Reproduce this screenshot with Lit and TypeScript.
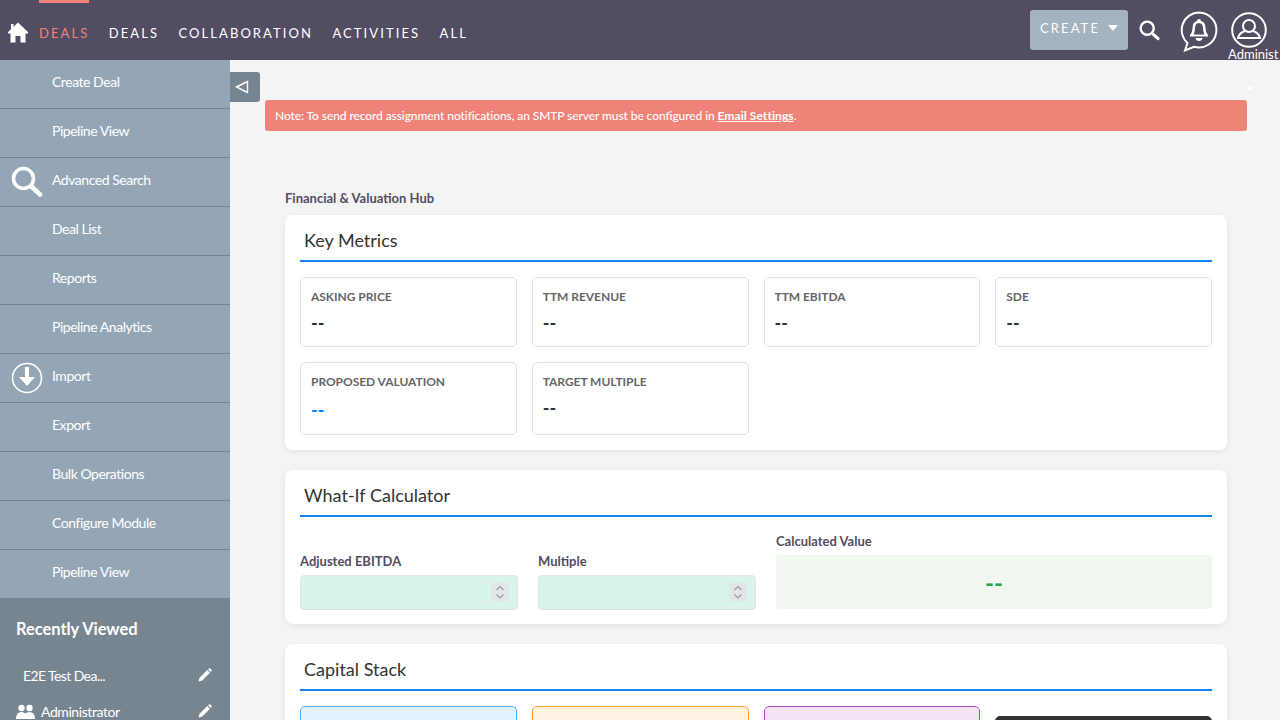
import { LitElement, html, css, svg } from "lit";
import { customElement } from "lit/decorators.js";

const side = ["Create Deal", "Pipeline View", "Advanced Search", "Deal List", "Reports", "Pipeline Analytics", "Import", "Export", "Bulk Operations", "Configure Module", "Pipeline View"];
const metrics1 = ["ASKING PRICE", "TTM REVENUE", "TTM EBITDA", "SDE"];

const pencil = svg`<svg class="pen" width="14" height="14" viewBox="0 0 14 14"><path fill="#fff" d="M0.5 13.5 L1.5 9.7 L9.3 2 L12 4.7 L4.3 12.4 Z M10 1.3 L11 .4 Q11.6 0 12.2 .4 L13.5 1.7 Q14 2.3 13.5 2.9 L12.7 4 Z"/></svg>`;
const searchIcon = (s: number) => svg`<svg width="${s}" height="${s}" viewBox="0 0 32 32"><circle cx="12.5" cy="12.5" r="10" fill="none" stroke="#fff" stroke-width="3.6"/><path d="M21 21 L29 28.5" stroke="#fff" stroke-width="4.6" stroke-linecap="round"/></svg>`;

@customElement("app-root")
export class AppRoot extends LitElement {
  static styles = css`
    :host { display: block; width: 1280px; height: 720px; overflow: hidden; position: relative; background: #f4f4f4; font-family: Lato, "Liberation Sans", sans-serif; }
    * { box-sizing: border-box; }
    .top { height: 60px; background: #534d64; display: flex; align-items: center; position: relative; color: #fff; }
    .home { margin: 4px 0 0 7px; width: 22px; height: 22px; display: flex; }
    .nav { display: flex; margin-left: 10px; height: 60px; }
    .nav a { font-size: 13px; letter-spacing: 2.08px; line-height: 66px; margin-right: 19.4px; color: #fff; position: relative; }
    .nav a.on { color: #f08377; }
    .nav a.on::before { content: ""; position: absolute; left: 0; right: 0; top: 0; height: 3px; background: #f08377; }
    .right { margin-left: auto; display: flex; align-items: flex-start; height: 60px; }
    .create { margin-top: 10px; width: 98px; height: 40px; background: #a3b3bf; border-radius: 3px; font-size: 13px; letter-spacing: 2.1px; display: flex; align-items: center; padding: 0 0 5px 10px; gap: 8px; }
    .create i { width: 0; height: 0; border: 5.5px solid transparent; border-top: 6px solid #fff; border-bottom: 0; }
    .s { margin: 20px 0 0 11px; display: flex; }
    .bell { margin: 11px 0 0 20px; display: flex; }
    .usr { margin: 12px 0 0 13px; width: 49px; position: relative; height: 48px; }
    .usr span { position: absolute; left: -3px; top: 34px; font-size: 13px; line-height: 16px; white-space: nowrap; }
    .body { display: flex; height: 660px; }
    .side { width: 230px; flex: none; background: #778591; color: #fff; }
    .item { height: 49px; background: #94a6b6; border-bottom: 1px solid #778591; font-size: 14px; letter-spacing: -.46px; line-height: 44px; padding-left: 52px; position: relative; }
    .item svg { position: absolute; left: 11px; top: 8px; }
    .rv-t { font-size: 16.5px; font-weight: 700; letter-spacing: -.05px; padding: 18px 0 0 16px; line-height: 24px; }
    .rv { display: flex; align-items: center; font-size: 14px; letter-spacing: -.42px; height: 36px; padding: 0 18px 0 23px; justify-content: space-between; }
    .rv.first { margin-top: 16px; letter-spacing: -.6px; }
    .rv.adm { padding-left: 16px; }
    .rv.adm div { display: flex; gap: 6px; align-items: center; }
    .main { flex: 1; position: relative; padding: 40px 33px 0 35px; min-width: 0; }
    .tog { position: absolute; left: 0; top: 12px; width: 30px; height: 30px; background: #778591; border-radius: 0 3px 3px 0; display: flex; align-items: center; padding-left: 5px; }
    .tri { position: absolute; left: 1015px; top: 27px; width: 0; height: 0; border: 4px solid transparent; border-top: 4px solid #fff; border-bottom: 0; }
    .alert { height: 31px; background: #f08377; border-radius: 3px; color: #fff; font-size: 12px; line-height: 31px; padding-left: 10px; letter-spacing: -.09px; font-weight: 500; }
    .alert b { text-decoration: underline; letter-spacing: .07px; }
    .hub { margin: 59px 0 0 20px; font-size: 13px; font-weight: 700; color: #534d64; line-height: 16px; }
    .card { margin: 9px 20px 20px; background: #fff; border-radius: 8px; box-shadow: 0 2px 6px rgba(0,0,0,.07); padding: 15px 15px; }
    .card h3 { margin: 0; font-size: 18px; font-weight: 400; color: #333; line-height: 20px; padding: 0 0 10px 4px; border-bottom: 2px solid #1584f5; height: 32px; }
    .grid { display: grid; grid-template-columns: repeat(4, 1fr); gap: 15px; margin-top: 15px; }
    .m { height: 70px; border: 1px solid #e2e2e2; border-radius: 5px; padding: 11px 10px; }
    .m.tall { height: 73px; }
    .m label { display: block; font-size: 12px; font-weight: 700; letter-spacing: -.04px; color: #666; line-height: 16px; }
    .m div { font-size: 18px; font-weight: 700; color: #333; line-height: 24px; margin-top: 6px; }
    .m.blue div { color: #0a84ff; margin-top: 8px; }
    .calc { display: grid; grid-template-columns: 1fr 1fr 2fr; gap: 20px; align-items: end; margin: 16px 0 -1px; }
    .f label { display: block; font-size: 13px; font-weight: 700; color: #534d64; line-height: 16px; margin-bottom: 6px; }
    .inp { height: 35px; background: #d9f4ec; border: 1px solid #dce6e3; border-radius: 4px; position: relative; }
    .spin { position: absolute; right: 8px; top: 7px; width: 18px; height: 18px; background: #e3e6e9; display: flex; }
    .val { height: 54px; background: #eff7ef; border-radius: 4px; text-align: center; color: #28a745; font-size: 24px; font-weight: 700; line-height: 56px; margin-bottom: 1px; }
    .stack { display: grid; grid-template-columns: repeat(4, 1fr); gap: 15px; margin-top: 15px; }
    .b { height: 80px; border: 1px solid; border-radius: 5px; }
    .b.a { background: #e3f2fd; border-color: #4dabf7; }
    .b.o { background: #fff3e0; border-color: #ffa726; }
    .b.p { background: #f3e5f5; border-color: #ab47bc; }
    .b.d { background: #333; border-color: #333; margin-top: 10px; }
  `;

  icon(name: string) {
    if (name === "Advanced Search") return searchIcon(32);
    if (name === "Import") return svg`<svg width="32" height="32" viewBox="0 0 32 32"><circle cx="16" cy="16" r="14.5" fill="none" stroke="#fff" stroke-width="1.6"/><path fill="#fff" d="M14 5 H18 V15 H24 L16 24 L8 15 H14 Z"/></svg>`;
    return "";
  }

  render() {
    return html`
      <div class="top">
        <div class="home"><svg width="22" height="22" viewBox="0 0 22 22"><path fill="#fff" d="M11 1.5 L21 11 V12.5 H18.5 V21.5 H13.5 V15 H8.5 V21.5 H3.5 V12.5 H1 V11 L4 8.2 V3 H6.5 V5.8 Z"/></svg></div>
        <div class="nav"><a class="on">DEALS</a><a>DEALS</a><a>COLLABORATION</a><a>ACTIVITIES</a><a>ALL</a></div>
        <div class="right">
          <div class="create">CREATE<i></i></div>
          <div class="s">${searchIcon(21)}</div>
          <div class="bell"><svg width="38" height="42" viewBox="0 0 38 42"><path fill="none" stroke="#fff" stroke-width="2" d="M19 1.5 A17.5 17.5 0 1 1 14 35.8 L5 39.5 L7.5 32 A17.5 17.5 0 0 1 19 1.5 Z"/><path fill="#fff" d="M19 8 Q21 8 21 10 Q25.5 11 25.5 17 Q25.5 21.5 28 24 V25.5 H10 V24 Q12.5 21.5 12.5 17 Q12.5 11 17 10 Q17 8 19 8 Z M15.5 27 H22.5 Q22 30 19 30 Q16 30 15.5 27 Z"/><path fill="#534d64" d="M19 12 Q15 12.3 15 17 Q15 21 13.5 23.5 H24.5 Q23 21 23 17 Q23 12.3 19 12 Z"/></svg></div>
          <div class="usr"><svg width="36" height="36" viewBox="0 0 36 36"><circle cx="18" cy="18" r="16.8" fill="none" stroke="#fff" stroke-width="2"/><circle cx="18" cy="14" r="6" fill="none" stroke="#fff" stroke-width="2"/><path fill="none" stroke="#fff" stroke-width="2" d="M14 19 Q8 21 7 26 H29 Q28 21 22 19"/></svg><span>Administ</span></div>
        </div>
      </div>
      <div class="body">
        <div class="side">
          ${side.map((s) => html`<div class="item">${this.icon(s)}${s}</div>`)}
          <div class="rv-t">Recently Viewed</div>
          <div class="rv first"><span>E2E Test Dea...</span>${pencil}</div>
          <div class="rv adm"><div><svg width="19" height="17" viewBox="0 0 19 17"><circle cx="5.5" cy="5" r="3.2" fill="#fff"/><circle cx="13.5" cy="5" r="3.2" fill="#fff"/><path fill="#fff" d="M0 16 Q0 9 5.5 9 Q8 9 9.2 10.5 Q10.5 9 13.5 9 Q19 9 19 16 Z"/></svg><span>Administrator</span></div>${pencil}</div>
        </div>
        <div class="main">
          <div class="tog"><svg width="14" height="14" viewBox="0 0 14 14"><path fill="none" stroke="#fff" stroke-width="1.4" d="M1.5 7 L12.5 1.5 V12.5 Z"/></svg></div>
          <div class="tri"></div>
          <div class="alert">Note: To send record assignment notifications, an SMTP server must be configured in <b>Email Settings</b>.</div>
          <div class="hub">Financial &amp; Valuation Hub</div>
          <div class="card">
            <h3>Key Metrics</h3>
            <div class="grid">
              ${metrics1.map((m) => html`<div class="m"><label>${m}</label><div>--</div></div>`)}
              <div class="m tall blue"><label>PROPOSED VALUATION</label><div>--</div></div>
              <div class="m tall"><label>TARGET MULTIPLE</label><div>--</div></div>
            </div>
          </div>
          <div class="card">
            <h3>What-If Calculator</h3>
            <div class="calc">
              ${["Adjusted EBITDA", "Multiple"].map((l) => html`<div class="f"><label>${l}</label><div class="inp"><span class="spin"><svg width="18" height="18" viewBox="0 0 18 18"><path fill="none" stroke="#9a9aa8" stroke-width="1.2" d="M5.5 7 L9 3.5 L12.5 7 M5.5 11.5 L9 15 L12.5 11.5"/></svg></span></div></div>`)}
              <div class="f"><label>Calculated Value</label><div class="val">--</div></div>
            </div>
          </div>
          <div class="card">
            <h3>Capital Stack</h3>
            <div class="stack"><div class="b a"></div><div class="b o"></div><div class="b p"></div><div class="b d"></div></div>
          </div>
        </div>
      </div>
    `;
  }
}
